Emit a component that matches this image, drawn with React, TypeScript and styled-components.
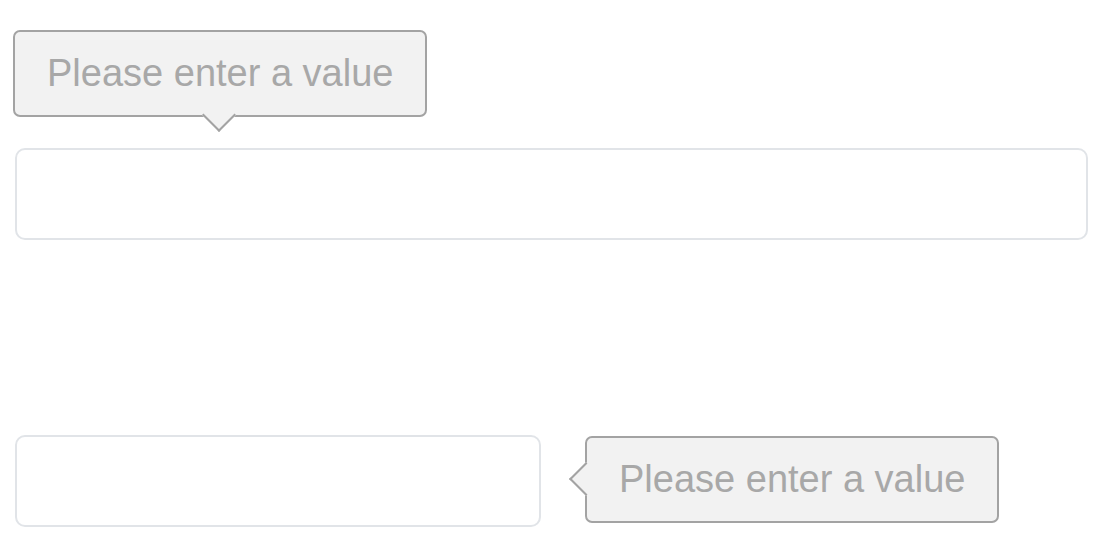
import React from 'react';
import styled, { createGlobalStyle } from 'styled-components';

const GlobalStyle = createGlobalStyle`
  html, body {
    margin: 0;
    padding: 0;
    background: #ffffff;
  }
  body {
    font-family: "Liberation Sans", Arial, sans-serif;
  }
`;

const Page = styled.div`
  padding: 30px 0 0 13px;
  display: flex;
  flex-direction: column;
`;

const Field = styled.div`
  display: flex;
  flex-direction: column;
  align-items: flex-start;
  gap: 31px;
`;

const Row = styled.div`
  display: flex;
  align-items: flex-start;
  gap: 44px;
  margin-top: 195px;
  padding-left: 2px;
`;

const Bubble = styled.div<{ $side: 'bottom' | 'left' }>`
  position: relative;
  box-sizing: border-box;
  height: 87px;
  margin-top: ${(p) => (p.$side === 'left' ? '1px' : '0')};
  padding: 0 32px;
  background: #f2f2f2;
  border: 2px solid #a3a3a3;
  border-radius: 7px;
  color: #a8a8a8;
  font-size: 38px;
  line-height: 83px;
  white-space: nowrap;

  &::after {
    content: '';
    position: absolute;
    box-sizing: border-box;
    width: 24px;
    height: 24px;
    background: #f2f2f2;
    border: 2px solid #a3a3a3;
    transform: rotate(45deg);
    ${(p) =>
      p.$side === 'bottom'
        ? `
      left: 192px;
      bottom: -12px;
      border-top: none;
      border-left: none;
    `
        : `
      left: -13px;
      top: 29px;
      border-top: none;
      border-right: none;
    `}
  }
`;

const Input = styled.input<{ $width: number }>`
  box-sizing: border-box;
  width: ${(p) => p.$width}px;
  height: 92px;
  margin-left: ${(p) => (p.$width > 600 ? '2px' : '0')};
  border: 2px solid #e1e4e8;
  border-radius: 10px;
  background: #ffffff;
  outline: none;
  font-size: 32px;
  padding: 0 20px;
  font-family: "Liberation Sans", Arial, sans-serif;
`;

const App: React.FC = () => {
  return (
    <>
      <GlobalStyle />
      <Page>
        <Field>
          <Bubble $side="bottom">Please enter a value</Bubble>
          <Input $width={1073} />
        </Field>
        <Row>
          <Input $width={526} />
          <Bubble $side="left">Please enter a value</Bubble>
        </Row>
      </Page>
    </>
  );
};

export default App;
